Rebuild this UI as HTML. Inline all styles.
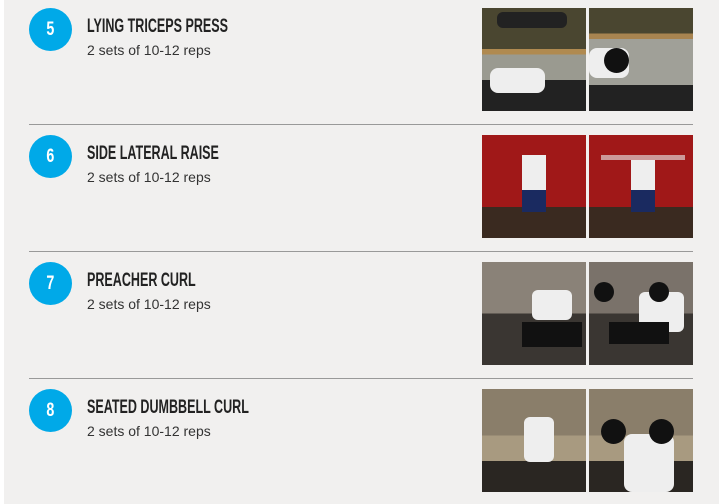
<!DOCTYPE html>
<html><head><meta charset="utf-8"><style>
*{margin:0;padding:0;box-sizing:border-box}
html{background:#f1f0ef;overflow:hidden}
body{width:719px;height:504px;background:#f1f0ef;position:relative;overflow:hidden;font-family:"Liberation Sans",sans-serif}
.strip{position:absolute;left:0;top:0;width:4px;height:504px;background:#fff}
.row{position:absolute;left:0;width:719px;height:127px}
.c{position:absolute;left:29px;top:8px;width:43px;height:43px;border-radius:50%;background:#00a9e8;color:#fff;font:bold 19px "Liberation Sans",sans-serif;text-align:center;line-height:43px}
.c span{display:inline-block;transform:scaleX(.75)}
.t{position:absolute;left:87px;top:16px;font:bold 19px "Liberation Sans",sans-serif;color:#222;transform:scaleX(.66);transform-origin:0 0;white-space:nowrap}
.s{position:absolute;left:87px;top:42px;font-size:14px;color:#333}
.img{position:absolute;top:8px;width:104px;height:103px;overflow:hidden}
.i1{left:482px}.i2{left:589px}
.hr{position:absolute;left:29px;width:664px;height:1px;background:#999}
.b{position:absolute}
</style></head><body>
<div class="strip"></div>

<div class="row" style="top:0">
<div class="c"><span>5</span></div><div class="t">LYING TRICEPS PRESS</div><div class="s">2 sets of 10-12 reps</div>
<div class="img i1" style="background:linear-gradient(#4a4630 0 40%,#b08a50 40% 45%,#9a9a90 45% 70%,#222 70%)"><div class="b" style="left:8px;top:60px;width:55px;height:25px;background:#eee;border-radius:8px"></div><div class="b" style="left:15px;top:4px;width:70px;height:16px;background:#222;border-radius:6px"></div></div>
<div class="img i2" style="background:linear-gradient(#4a4630 0 25%,#a88450 25% 30%,#a0a098 30% 75%,#222 75%)"><div class="b" style="left:0;top:40px;width:40px;height:30px;background:#eee;border-radius:8px"></div><div class="b" style="left:15px;top:40px;width:25px;height:25px;background:#111;border-radius:50%"></div></div>
</div>
<div class="hr" style="top:124px"></div>

<div class="row" style="top:127px">
<div class="c"><span>6</span></div><div class="t">SIDE LATERAL RAISE</div><div class="s">2 sets of 10-12 reps</div>
<div class="img i1" style="background:linear-gradient(#a01818 0 70%,#3a2a20 70%)"><div class="b" style="left:40px;top:20px;width:24px;height:35px;background:#eee"></div><div class="b" style="left:40px;top:55px;width:24px;height:22px;background:#1a2a60"></div></div>
<div class="img i2" style="background:linear-gradient(#a01818 0 70%,#3a2a20 70%)"><div class="b" style="left:42px;top:20px;width:24px;height:35px;background:#eee"></div><div class="b" style="left:42px;top:55px;width:24px;height:22px;background:#1a2a60"></div><div class="b" style="left:12px;top:20px;width:84px;height:5px;background:#c99"></div></div>
</div>
<div class="hr" style="top:251px"></div>

<div class="row" style="top:254px">
<div class="c"><span>7</span></div><div class="t">PREACHER CURL</div><div class="s">2 sets of 10-12 reps</div>
<div class="img i1" style="background:linear-gradient(#8a8278 0 50%,#3a3632 50%)"><div class="b" style="left:50px;top:28px;width:40px;height:30px;background:#eee;border-radius:6px"></div><div class="b" style="left:40px;top:60px;width:60px;height:25px;background:#111"></div></div>
<div class="img i2" style="background:linear-gradient(#7a726a 0 50%,#3a3632 50%)"><div class="b" style="left:50px;top:30px;width:45px;height:40px;background:#eee;border-radius:6px"></div><div class="b" style="left:5px;top:20px;width:20px;height:20px;background:#111;border-radius:50%"></div><div class="b" style="left:60px;top:20px;width:20px;height:20px;background:#111;border-radius:50%"></div><div class="b" style="left:20px;top:60px;width:60px;height:22px;background:#111"></div></div>
</div>
<div class="hr" style="top:378px"></div>

<div class="row" style="top:381px">
<div class="c"><span>8</span></div><div class="t">SEATED DUMBBELL CURL</div><div class="s">2 sets of 10-12 reps</div>
<div class="img i1" style="background:linear-gradient(#8a7e6a 0 45%,#a89a80 45% 70%,#2a2622 70%)"><div class="b" style="left:42px;top:28px;width:30px;height:45px;background:#eee;border-radius:6px"></div></div>
<div class="img i2" style="background:linear-gradient(#8a7e6a 0 45%,#a89a80 45% 70%,#2a2622 70%)"><div class="b" style="left:35px;top:45px;width:50px;height:58px;background:#eee;border-radius:8px"></div><div class="b" style="left:12px;top:30px;width:25px;height:25px;background:#111;border-radius:50%"></div><div class="b" style="left:60px;top:30px;width:25px;height:25px;background:#111;border-radius:50%"></div></div>
</div>
</body></html>
